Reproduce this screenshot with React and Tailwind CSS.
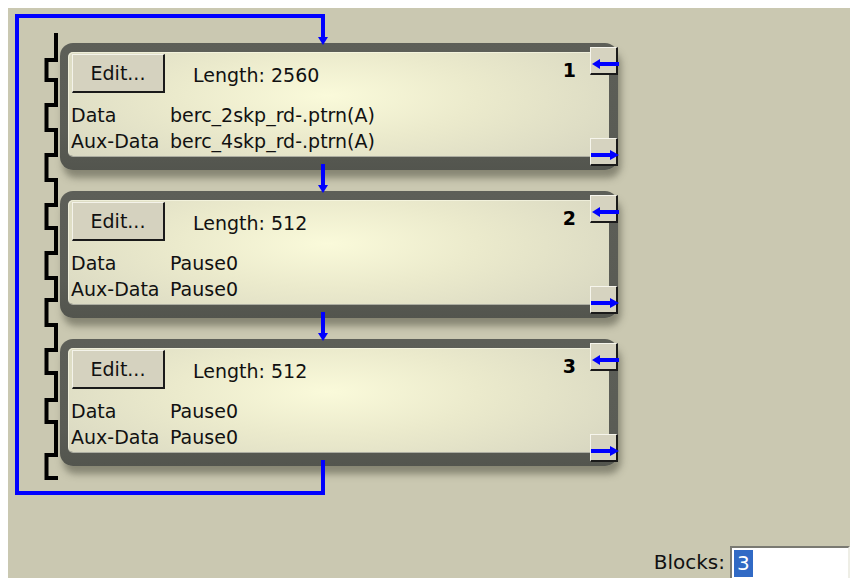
import React from "react";

const blocks = [
  { n: 1, len: 2560, data: "berc_2skp_rd-.ptrn(A)", aux: "berc_4skp_rd-.ptrn(A)" },
  { n: 2, len: 512, data: "Pause0", aux: "Pause0" },
  { n: 3, len: 512, data: "Pause0", aux: "Pause0" },
];

// comb transitions (page coords)
const combYs = [60, 80, 105, 130, 155, 180, 205, 228, 253, 278, 300, 325, 350, 373, 400, 422, 455, 478];

function combPath() {
  const L = 46.5, R = 56;
  let d = `M ${R} 33`;
  let x = R;
  for (const y of combYs) {
    d += ` L ${x} ${y}`;
    x = x === R ? L : R;
    d += ` L ${x} ${y}`;
  }
  d += ` L 58 478`;
  return d;
}

function SideButton({ dir, className }) {
  return (
    <div
      className={`absolute right-0 w-[28px] h-[28px] bg-[#d6d3c0] border-t border-l border-t-[#f6f5ec] border-l-[#f6f5ec] border-r-2 border-b-2 border-r-[#1a1a1a] border-b-[#1a1a1a] ${className}`}
    >
      <svg className="absolute left-0 top-[11px]" width="28" height="10" viewBox="0 0 28 10">
        {dir === "left" ? (
          <>
            <rect x="7" y="3" width="21" height="4" fill="#0000ff" />
            <polygon points="1,5 9,0 9,10" fill="#0000ff" />
          </>
        ) : (
          <>
            <rect x="0" y="3" width="20" height="4" fill="#0000ff" />
            <polygon points="28,5 19,0 19,10" fill="#0000ff" />
          </>
        )}
      </svg>
    </div>
  );
}

function Block({ b }) {
  return (
    <div className="relative w-[558px] h-[127px] rounded-[13px] bg-[linear-gradient(to_bottom,#5d5f58_0%,#5a5c55_70%,#53554e_100%)] pt-[9px] pl-[8px] pr-[9px] pb-[14px] shadow-[3px_8px_7px_rgba(70,70,55,0.5)]">
      <div className="relative h-full rounded-[5px] bg-[radial-gradient(ellipse_62%_95%_at_48%_42%,#fafada_0%,#ebeacc_45%,#d8d7c1_100%)] shadow-[inset_1px_1px_0_rgba(255,255,240,0.5),0_1px_0_rgba(230,230,215,0.6)]">
        <div className="flex items-center pt-[2px] pl-[4px]">
          <div className="w-[93px] h-[39px] flex items-center justify-center bg-[#d5d2bf] border-t border-l border-t-[#f4f3ea] border-l-[#f4f3ea] border-r-2 border-b-2 border-r-[#1a1a1a] border-b-[#1a1a1a] text-[19px] leading-[26px] text-[#111]">
            Edit...
          </div>
          <div className="ml-[28px] mt-[3px] text-[19px] leading-[26px] text-[#111]">Length: {b.len}</div>
        </div>
        <div className="mt-[9px] pl-[3px] grid grid-cols-[99px_auto] text-[19px] leading-[26px] text-[#111]">
          <div>Data</div>
          <div>{b.data}</div>
          <div>Aux-Data</div>
          <div>{b.aux}</div>
        </div>
        <div className="absolute right-[33px] top-[5px] text-[19px] leading-[26px] font-bold text-black">{b.n}</div>
      </div>
      <SideButton dir="left" className="top-[4px]" />
      <SideButton dir="right" className="bottom-[4px]" />
    </div>
  );
}

export default function App() {
  const blue = "#0000ff";
  return (
    <div className="relative w-[850px] h-[578px] bg-white pt-2 pl-2 overflow-hidden font-['DejaVu_Sans',sans-serif]">
      <div className="h-full w-full bg-[#cac8b1] flex flex-col">
        <div className="ml-[52px] mt-[35px] flex flex-col gap-[21px]">
          {blocks.map((b) => (
            <Block key={b.n} b={b} />
          ))}
        </div>
        <div className="mt-auto flex items-center justify-end">
          <span className="mr-[5px] text-[20px] leading-[26px] text-[#111]">Blocks:</span>
          <div className="w-[120px] h-[32px] bg-white border-t-2 border-l-2 border-t-[#7a7a72] border-l-[#7a7a72] border-r-2 border-r-[#eeeee6] pl-[2px] pt-[2px]">
            <span className="inline-block bg-[#316ac5] text-white text-[20px] leading-[27px] px-[3px]">3</span>
          </div>
        </div>
      </div>
      <svg className="absolute left-0 top-0 pointer-events-none" width="850" height="578" viewBox="0 0 850 578">
        <path d={combPath()} fill="none" stroke="#000" strokeWidth="4" strokeLinejoin="miter" />
        <path d="M 17 38 L 17 493 L 323 493 L 323 460" fill="none" stroke={blue} strokeWidth="4" />
        <path d="M 17 40 L 17 16 L 323 16 L 323 38" fill="none" stroke={blue} strokeWidth="4" />
        <polygon points="318,37 328,37 323,45" fill={blue} />
        <line x1="323" y1="164" x2="323" y2="186" stroke={blue} strokeWidth="4" />
        <polygon points="318,185 328,185 323,193" fill={blue} />
        <line x1="323" y1="312" x2="323" y2="334" stroke={blue} strokeWidth="4" />
        <polygon points="318,333 328,333 323,341" fill={blue} />
      </svg>
    </div>
  );
}
